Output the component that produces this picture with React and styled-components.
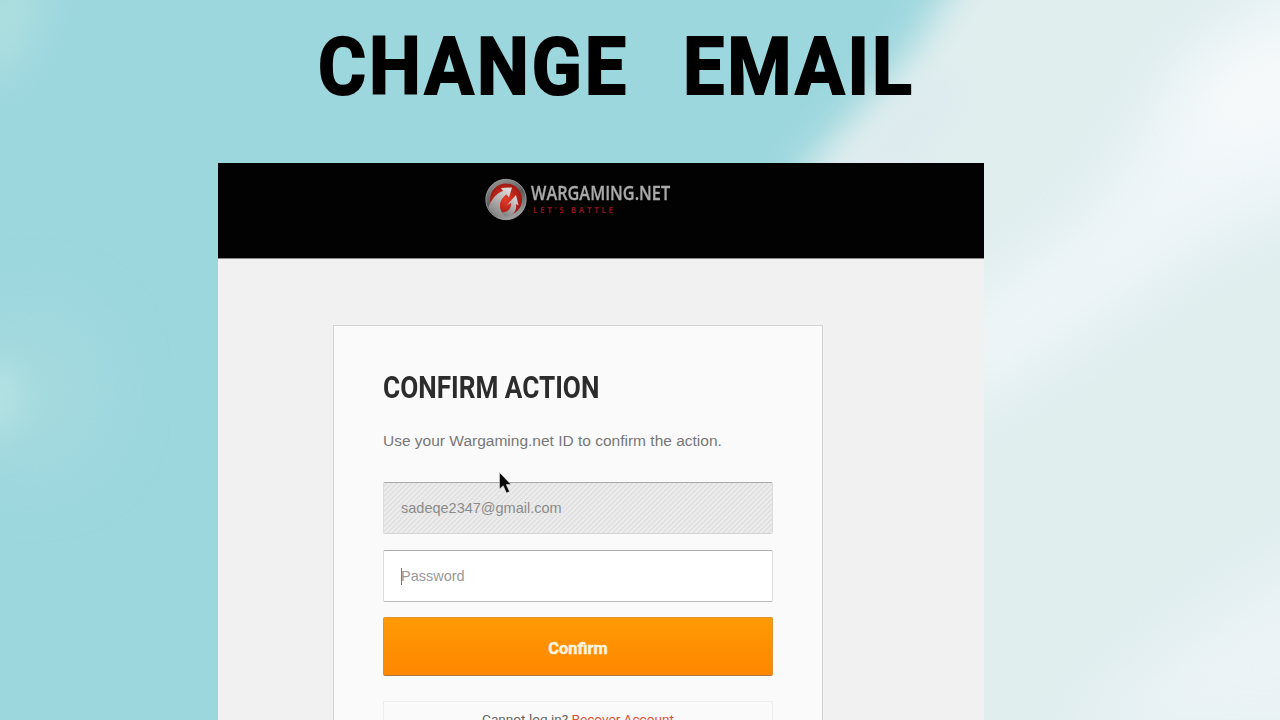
import React from 'react';
import styled, {createGlobalStyle} from 'styled-components';

const App = () => {
    return <Scene>
            <GlobalStyle/>
            <Sky/>
            <Title>
                <Word $width={303}>CHANGE</Word>
                <Word $width={228}>EMAIL</Word>
            </Title>
            <Page>
                <Header>
                    <Emblem/>
                    <Brand>
                        <BrandName><Squeeze $scale={0.814}>WARGAMING.NET</Squeeze></BrandName>
                        <Slogan>LET'S BATTLE</Slogan>
                    </Brand>
                </Header>
                <Card>
                    <Heading><Squeeze $scale={0.831}>CONFIRM ACTION</Squeeze></Heading>
                    <Hint>Use your Wargaming.net ID to confirm the action.</Hint>
                    <Field $disabled>sadeqe2347@gmail.com</Field>
                    <Field><Caret/>Password</Field>
                    <Button>Confirm</Button>
                    <Help>Cannot log in?&nbsp;<HelpLink>Recover Account</HelpLink></Help>
                </Card>
                <Pointer/>
            </Page>
        </Scene>;
};

const Sky = () => {
    return <SkySvg viewBox="0 0 1280 720" preserveAspectRatio="none">
            <defs>
                <filter id="soft" x="-50%" y="-50%" width="200%" height="200%"><feGaussianBlur stdDeviation="18"/></filter>
                <filter id="softer" x="-50%" y="-50%" width="200%" height="200%"><feGaussianBlur stdDeviation="32"/></filter>
            </defs>
            <rect width="1280" height="720" fill="#9dd7de"/>
            <path d="M1000 -90L905 60L800 175L760 800H1400V-90Z" fill="#e0eeee" filter="url(#soft)"/>
            <path d="M940 70L880 130L840 175L900 170L960 90Z" fill="#dceaf0" filter="url(#soft)"/>
            <path d="M1360 -60L1190 60L1090 220L940 330V420L1080 330L1220 230L1360 180Z" fill="#f0f6f9" filter="url(#softer)"/>
            <path d="M1320 30L1210 80L1180 150L1320 110Z" fill="#f8fbfb" filter="url(#softer)"/>
            <path d="M1360 520L1200 620L1060 740H1360Z" fill="#ebf3f6" filter="url(#softer)"/>
            <path d="M-20 -20H50L20 60L-20 90Z" fill="#aedfe0" filter="url(#soft)"/>
            <ellipse cx="30" cy="390" rx="70" ry="80" fill="#a4dade" filter="url(#softer)"/>
            <path d="M-20 350L25 395L-20 450Z" fill="#bce5e6" filter="url(#soft)"/>
        </SkySvg>;
};

const Emblem = () => {
    return <EmblemSvg viewBox="0 0 42 42">
            <defs>
                <linearGradient id="steel" x1="0.2" y1="0" x2="0.6" y2="1">
                    <stop offset="0" stopColor="#989898"/>
                    <stop offset="0.5" stopColor="#5c5c5c"/>
                    <stop offset="1" stopColor="#a2a2a2"/>
                </linearGradient>
                <linearGradient id="blade" x1="0.8" y1="0" x2="0.2" y2="1">
                    <stop offset="0" stopColor="#e2dcda"/>
                    <stop offset="1" stopColor="#808080"/>
                </linearGradient>
                <radialGradient id="ember">
                    <stop offset="0" stopColor="#e53a28"/>
                    <stop offset="1" stopColor="#a01a14"/>
                </radialGradient>
            </defs>
            <circle cx="21" cy="21" r="20.2" fill="url(#steel)" stroke="#a4a4a4" strokeWidth="0.8"/>
            <circle cx="21" cy="21" r="16" fill="url(#ember)"/>
            <path d="M3.5 29C6 21 11 15 18 12.5L16 9.5L27 9L24 19L21.5 16C16 20 12.5 26 17 34L21 38C13 39 6 35 3.5 29Z" fill="url(#blade)"/>
            <path d="M17 34C23 34 26.5 30 26 24.5L21.5 27L31 16.5L33.5 27L31 25.5C32 32 28 38 20 38Z" fill="url(#blade)"/>
        </EmblemSvg>;
};

const Pointer = () => {
    return <PointerSvg viewBox="0 0 13 22">
            <path d="M0.5 0.5V17L4.2 13.7L7.5 21L10.5 19.6L7.2 12.5H12Z" fill="#090909" stroke="#e8e8e8" strokeWidth="0.5"/>
        </PointerSvg>;
};

export default App;

const GlobalStyle = createGlobalStyle`
    body {
        margin: 0;
        overflow: hidden;
    }
    * {
        box-sizing: border-box;
    }
`;

const Scene = styled.div`
    position: relative;
    width: 1280px;
    height: 720px;
    overflow: hidden;
    font-family: 'Liberation Sans', Arial, sans-serif;
`;

const SkySvg = styled.svg`
    position: absolute;
    inset: 0;
    width: 100%;
    height: 100%;
`;

const Title = styled.h1`
    position: relative;
    display: flex;
    gap: 62px;
    height: 163px;
    margin: 0;
    padding: 19px 0 0 318px;
    font: 700 79px/96px Roboto, sans-serif;
    color: #000;
`;

const Word = styled.span`
    width: ${({$width}) => $width}px;
    white-space: nowrap;
    letter-spacing: 3.2px;
    transform: scaleX(0.93);
    transform-origin: left;
    -webkit-text-stroke: 2px #000;
`;

const Squeeze = styled.span`
    display: inline-block;
    white-space: nowrap;
    transform: scaleX(${({$scale}) => $scale});
    transform-origin: left;
`;

const Page = styled.main`
    position: relative;
    width: 766px;
    height: 557px;
    margin-left: 218px;
    background: #f1f1f1;
`;

const Header = styled.header`
    display: flex;
    height: 96px;
    padding: 15px 0 0 267px;
    background: #020202;
    border-bottom: 1px solid #8b8b8b;
`;

const EmblemSvg = styled.svg`
    width: 42px;
    height: 43px;
`;

const Brand = styled.div`
    margin-left: 4px;
    padding-top: 2px;
`;

const BrandName = styled.div`
    font: 600 20px/25px 'Open Sans', sans-serif;
    color: #aaa;
    -webkit-text-stroke: 0.3px #aaa;
`;

const Slogan = styled.div`
    padding-left: 2px;
    font: 700 8px/9px 'Open Sans', sans-serif;
    letter-spacing: 2.6px;
    color: #84111f;
`;

const Card = styled.section`
    display: flex;
    flex-direction: column;
    width: 490px;
    height: 500px;
    margin: 66px 0 0 115px;
    padding: 42px 49px 0;
    background: #fafafa;
    border: 1px solid #d3d3d3;
`;

const Heading = styled.h2`
    height: 40px;
    margin: 0;
    font: 700 31.5px/40px Roboto, sans-serif;
    color: #2c2c2c;
`;

const Hint = styled.p`
    height: 20px;
    margin: 23px 0 31px;
    font-size: 15.5px;
    line-height: 20px;
    color: #777;
    white-space: nowrap;
`;

const Field = styled.div`
    display: flex;
    flex: none;
    align-items: center;
    height: 52px;
    margin-bottom: 16px;
    padding-left: 17px;
    border: 1px solid #dcdcdc;
    border-top-color: #ababab;
    border-bottom-color: ${({$disabled}) => $disabled ? '#d5d5d5' : '#bcbcbc'};
    border-radius: 2px;
    background: ${({$disabled}) => $disabled
        ? 'repeating-linear-gradient(135deg, #ececec 0 1.2px, #dcdcdc 2.3px, #ececec 3.54px)'
        : '#fff'};
    font-size: 14.5px;
    color: ${({$disabled}) => $disabled ? '#8b8b8b' : '#999'};
`;

const Caret = styled.span`
    width: 1px;
    height: 17px;
    margin-right: -1px;
    background: #777;
`;

const Button = styled.button`
    flex: none;
    height: 59px;
    margin-top: -1px;
    padding: 3px 0 0;
    border: 1px solid #dd9330;
    border-bottom-color: #a77b43;
    border-radius: 2px;
    background: linear-gradient(#ff9a05, #ff8700);
    font: 700 16.4px Roboto, sans-serif;
    color: #fff5e0;
    -webkit-text-stroke: 0.4px #fff5e0;
`;

const Help = styled.div`
    display: flex;
    flex: none;
    justify-content: center;
    height: 60px;
    margin-top: 25px;
    padding-top: 8px;
    border: 1px solid #eee;
    font: 13.6px/18px Roboto, sans-serif;
    color: #666;
`;

const HelpLink = styled.a`
    color: #df5238;
`;

const PointerSvg = styled.svg`
    position: absolute;
    left: 281px;
    top: 309px;
    width: 13px;
    height: 22px;
`;
